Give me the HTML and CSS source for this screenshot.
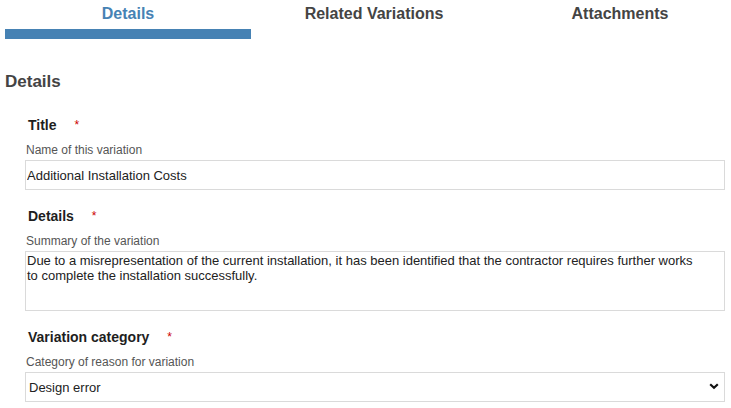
FILE: index.html
```html
<!DOCTYPE html>
<html lang="en">
<head>
  <meta charset="UTF-8" />
  <meta name="viewport" content="width=device-width, initial-scale=1.0"/>
  <title>Variation - Details</title>
  <link rel="stylesheet" href="styles.css">
</head>
<body>
  <div class="tabs">
    <div class="tab active">Details</div>
    <div class="tab">Related Variations</div>
    <div class="tab">Attachments</div>
  </div>

  <h2 class="section-title">Details</h2>

  <div class="form">
    <div class="field">
      <label class="field-label" for="title">Title <span class="req">*</span></label>
      <div class="field-help">Name of this variation</div>
      <input type="text" id="title" class="field-input" value="Additional Installation Costs">
    </div>

    <div class="field">
      <label class="field-label" for="details">Details <span class="req">*</span></label>
      <div class="field-help">Summary of the variation</div>
      <textarea id="details" class="field-input field-area">Due to a misrepresentation of the current installation, it has been identified that the contractor requires further works
to complete the installation successfully.</textarea>
    </div>

    <div class="field">
      <label class="field-label" for="category">Variation category <span class="req">*</span></label>
      <div class="field-help">Category of reason for variation</div>
      <div class="select-wrap">
        <select id="category" class="field-input field-select">
          <option>Design error</option>
          <option>Client change</option>
          <option>Site conditions</option>
        </select>
        <svg class="select-arrow" width="10" height="7" viewBox="0 0 10 7">
          <path d="M1.2 1.2 L5 4.8 L8.8 1.2" fill="none" stroke="#111" stroke-width="2.2"/>
        </svg>
      </div>
    </div>
  </div>
</body>
</html>
```

FILE: styles.css
```css
html {
  overflow: hidden;
}
body {
  font-family: "Liberation Sans", Arial, sans-serif;
  background: #fff;
  margin: 0;
  padding: 0 0 0 5px;
  color: #222;
}
.tabs {
  display: grid;
  grid-template-columns: repeat(3, 246px);
}
.tab {
  text-align: center;
  font-size: 16px;
  font-weight: bold;
  line-height: 20px;
  padding: 4px 0 5px;
  color: #444;
  border-bottom: 10px solid transparent;
}
.tab.active {
  color: #4682b4;
  border-bottom-color: #4682b4;
}
.section-title {
  margin: 33px 0 0;
  font-size: 17px;
  line-height: 20px;
  color: #444;
}
.form {
  width: 700px;
  padding: 25px 0 0 20px;
}
.field {
  margin-bottom: 18px;
}
.field-label {
  display: block;
  font-size: 14px;
  font-weight: bold;
  line-height: 16px;
  padding-left: 3px;
  margin-bottom: 9px;
  color: #1e1e1e;
}
.req {
  color: #cc0000;
  font-weight: normal;
  font-size: 12px;
  margin-left: 14px;
  vertical-align: top;
}
.field-help {
  font-size: 12px;
  line-height: 16px;
  padding-left: 1px;
  margin-bottom: 2px;
  color: #555;
}
.field-input {
  display: block;
  box-sizing: border-box;
  width: 700px;
  height: 30px;
  margin: 0;
  padding: 0 1px;
  border: 1px solid #dadada;
  border-radius: 0;
  background: #fff;
  font-family: "Liberation Sans", Arial, sans-serif;
  font-size: 13px;
  color: #222;
  outline: none;
}
.field-area {
  height: 60px;
  padding: 1px 1px;
  line-height: 15px;
  resize: none;
}
.select-wrap {
  position: relative;
}
.field-select {
  appearance: none;
  -webkit-appearance: none;
  padding: 0 3px;
}
.select-arrow {
  position: absolute;
  right: 6px;
  top: 11px;
  pointer-events: none;
}
```
